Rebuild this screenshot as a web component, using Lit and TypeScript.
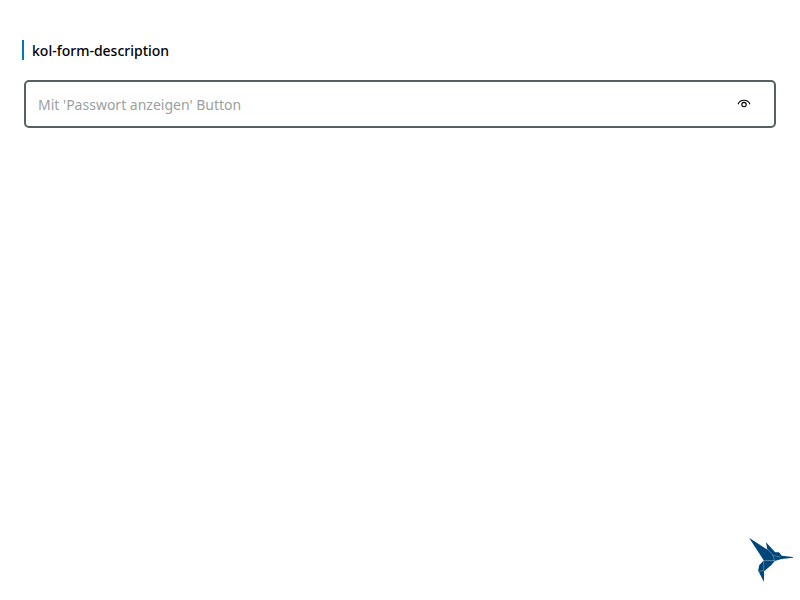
import { LitElement, html, css } from "lit";
import { customElement, state } from "lit/decorators.js";

@customElement("app-root")
class AppRoot extends LitElement {
  static styles = css`
    :host {
      display: block;
      box-sizing: border-box;
      min-height: 100vh;
      padding: 40px 24px;
      background: #fff;
      color: #000;
      font: 500 14px/18px "Noto Sans", "Open Sans", sans-serif;
    }
    form {
      display: grid;
      gap: 20px;
    }
    .description {
      margin: 0 0 0 -2px;
      padding: 2px 0 0 8px;
      border-left: 2px solid #0077b6;
    }
    .field {
      display: flex;
      align-items: center;
      box-sizing: border-box;
      height: 48px;
      padding: 0 8px 0 12px;
      border: 2px solid #576164;
      border-radius: 5px;
    }
    input {
      flex: 1;
      min-width: 0;
      padding: 2px 0 0;
      border: 0;
      outline: 0;
      background: none;
      color: inherit;
      font: inherit;
      font-weight: 400;
    }
    input::placeholder {
      color: #9a9fa0;
      opacity: 1;
    }
    button {
      display: grid;
      place-items: center;
      width: 44px;
      height: 44px;
      padding: 0;
      border: 0;
      background: none;
      color: #000;
    }
    .logo {
      position: fixed;
      right: 0;
      bottom: 10px;
    }
  `;

  @state() private visible = false;

  render() {
    return html`
      <form>
        <p class="description" id="description">kol-form-description</p>
        <div class="field">
          <input
            type=${this.visible ? "text" : "password"}
            aria-label="Passwort"
            aria-describedby="description"
            placeholder="Mit 'Passwort anzeigen' Button"
          />
          <button type="button" aria-label="Passwort anzeigen" @click=${() => (this.visible = !this.visible)}>
            <svg width="16" height="16" viewBox="0 0 16 16" fill="none" stroke="currentColor">
              <path d="M2 8.2C4 3 12 3 14 8.2" stroke-width="1.1" />
              <circle cx="8" cy="8.6" r="2.2" stroke-width="1.1" />
            </svg>
          </button>
        </div>
      </form>
      <svg class="logo" width="60" height="60" viewBox="0 0 180 180" aria-hidden="true">
        <g fill="#00457a">
          <path d="M27 23L87 62L97 72L103 91L72 92Z" />
          <path d="M78 37L107 68L98 76L82 59Z" />
          <path d="M95 75L104 67L117 67L125 77L159 81V83L125 87L104 93Z" />
          <path d="M72 91H106L95 104L70 126Z" />
          <path d="M72 91V122L54 124L58 105Z" />
          <path d="M55 123L72 121L72 156Z" />
        </g>
        <path
          d="M81 56L97 73L104 92M72 92H104M71 92V122L55 124M98 76L121 81"
          fill="none"
          stroke="#b5cede"
          stroke-width="1.2"
        />
      </svg>
    `;
  }
}
